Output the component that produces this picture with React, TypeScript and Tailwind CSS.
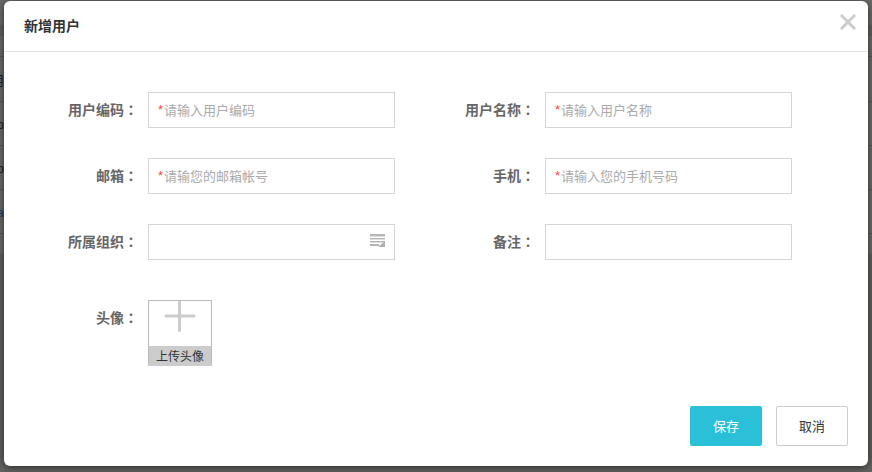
import React, { useId } from 'react';

type FieldProps = {
  label: string;
  placeholder?: string;
  required?: boolean;
  children?: React.ReactNode;
};

function Colon() {
  return <span className="font-['Noto_Sans_CJK_TC',sans-serif] leading-none">：</span>;
}

function Field({ label, placeholder, required, children }: FieldProps) {
  const id = useId();
  return (
    <div className="flex items-center gap-2.5 pr-[30px]">
      <label htmlFor={id} className="w-[110px] shrink-0 text-right text-sm font-bold text-[#666]">
        {label}
        <Colon />
      </label>
      <div className="flex h-9 min-w-0 flex-1 items-center border border-[#d5d5d5] px-[9px] text-[13px]">
        {required && <span className="w-1.5 shrink-0 text-[#ff4444]">*</span>}
        <input
          id={id}
          type="text"
          required={required}
          placeholder={placeholder}
          className="h-full min-w-0 flex-1 bg-transparent text-[#333] outline-none placeholder:text-[#aaa]"
        />
        {children}
      </div>
    </div>
  );
}

function ListIcon() {
  return (
    <svg width="15" height="13" viewBox="0 0 15 13" aria-hidden="true">
      <path d="M0 0h15v2H0zM0 4h15v1H0zM0 7h15v1H0zM0 10h9v2H0z" fill="#b5b5b5" />
      <path d="M0 2h15v1H0zM0 5h15v1H0zM0 8h13v1H0z" fill="#dedede" />
      <path d="M15 7v6H8z" fill="#b0b0b0" />
    </svg>
  );
}

const rows = [
  { text: '用', color: 'text-[#222]' },
  { text: 'o', color: 'text-[#222]' },
  { text: 'o', color: 'text-[#222]' },
  { text: 'a', color: 'text-[#1d3f5c]' },
];

function Backdrop() {
  return (
    <div className="absolute inset-0 overflow-hidden bg-[#6c6c6a]" aria-hidden="true">
      <div className="h-[25px]" />
      <div className="h-[11px] bg-[#626261]" />
      <div className="h-[21px] border-b border-[#5a5a59]" />
      <div className="pt-px">
        {rows.map((row, i) => (
          <div
            key={i}
            className={`flex h-11 items-center border-b border-[#5a5a59] pt-0.5 text-[13px] ${row.color}`}
          >
            <span className="flex w-1 justify-end">{row.text}</span>
          </div>
        ))}
      </div>
      <div className="h-5" />
      <div className="h-full bg-[#626261]" />
    </div>
  );
}

export default function App() {
  return (
    <div className="relative min-h-screen px-1 pt-px pb-1.5 font-['Liberation_Sans','Noto_Sans_CJK_SC',sans-serif]">
      <Backdrop />
      <section
        role="dialog"
        aria-labelledby="dialog-title"
        className="relative rounded-md bg-white shadow-[0_1px_8px_rgba(0,0,0,0.6)]"
      >
        <header className="flex h-[51px] items-center justify-between border-b border-[#e2e2e2] pr-3 pl-5">
          <h1 id="dialog-title" className="text-sm font-bold text-[#333]">
            新增用户
          </h1>
          <button type="button" aria-label="关闭" className="mb-2">
            <svg width="16" height="16" viewBox="0 0 16 16" stroke="#ccc" strokeWidth="3" aria-hidden="true">
              <path d="M1 1l14 14M15 1L1 15" />
            </svg>
          </button>
        </header>
        <form>
          <div className="grid grid-cols-2 gap-y-[30px] pt-10 pr-[46px] pl-6">
            <Field label="用户编码" placeholder="请输入用户编码" required />
            <Field label="用户名称" placeholder="请输入用户名称" required />
            <Field label="邮箱" placeholder="请输您的邮箱帐号" required />
            <Field label="手机" placeholder="请输入您的手机号码" required />
            <Field label="所属组织">
              <button type="button" aria-label="选择组织" className="mb-1">
                <ListIcon />
              </button>
            </Field>
            <Field label="备注" />
          </div>
          <div className="flex gap-2.5 pt-10 pl-6">
            <span className="w-[110px] text-right text-sm leading-9 font-bold text-[#666]">
              头像
              <Colon />
            </span>
            <button type="button" className="flex h-[66px] w-16 flex-col border border-[#bbb] border-b-[#ccc] bg-[#ccc] text-xs text-[#333]">
              <span className="flex w-full flex-1 justify-center bg-white">
                <svg width="32" height="31" viewBox="0 0 32 31" aria-hidden="true">
                  <path d="M15.5 0v29.5M2 15h28" stroke="#ccc" strokeWidth="3" strokeLinecap="round" />
                </svg>
              </span>
              <span className="w-full pt-1 text-center leading-[15px]">上传头像</span>
            </button>
          </div>
          <div className="flex justify-end gap-3.5 px-5 pt-10 pb-5 text-[13px]">
            <button type="submit" className="h-10 w-[72px] rounded-xs bg-[#29c0d8] pt-0.5 text-white">
              保存
            </button>
            <button type="button" className="h-10 w-[72px] rounded-xs border border-[#ccc] bg-white pt-0.5 text-[#333]">
              取消
            </button>
          </div>
        </form>
      </section>
    </div>
  );
}
